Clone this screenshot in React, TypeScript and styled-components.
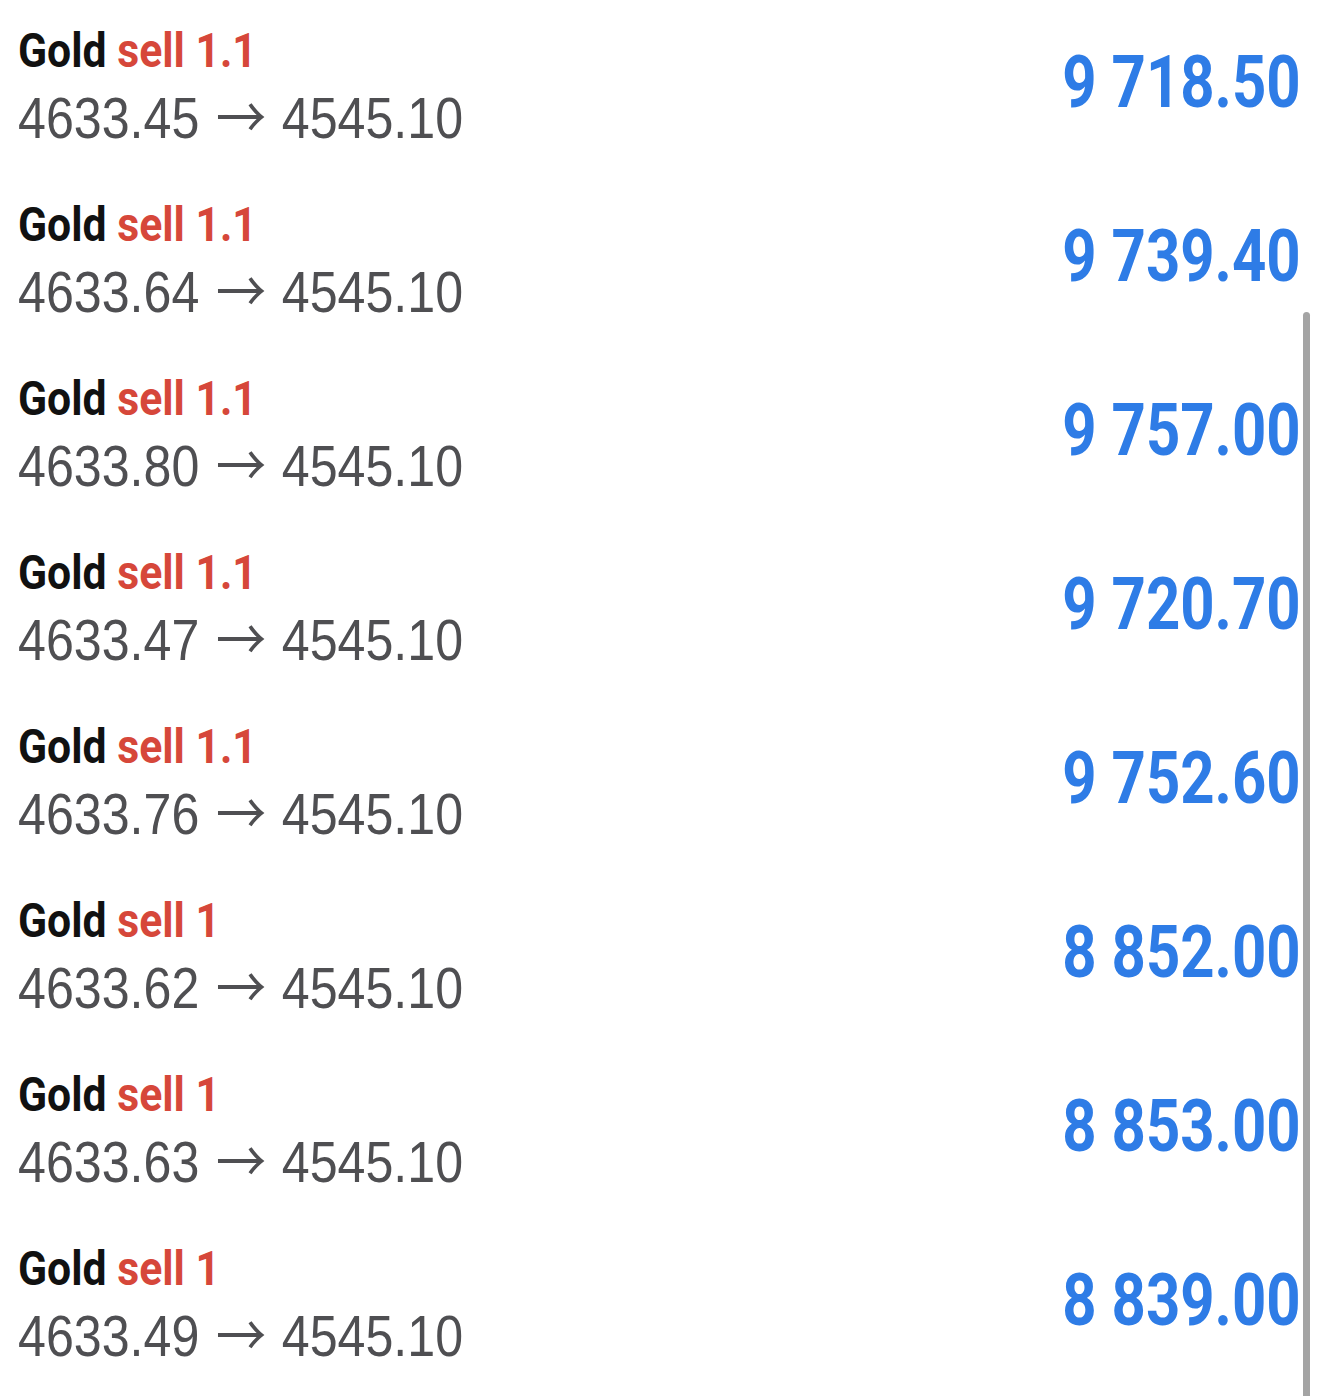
import React from "react";
import styled, { createGlobalStyle } from "styled-components";

const Global = createGlobalStyle`
  html, body { margin: 0; padding: 0; background: #ffffff; }
  body { font-family: "Liberation Sans", Arial, sans-serif; }
`;

const Page = styled.div`
  position: relative;
  width: 1320px;
  height: 1396px;
  overflow: hidden;
  background: #ffffff;
`;

const List = styled.div`
  display: flex;
  flex-direction: column;
`;

const Row = styled.div`
  height: 174px;
  box-sizing: border-box;
  padding: 22.5px 19px 0 18px;
  display: flex;
  justify-content: space-between;
  align-items: flex-start;
`;

const Left = styled.div`
  display: flex;
  flex-direction: column;
`;

const Title = styled.div`
  font-family: Roboto, "Noto Sans", sans-serif;
  font-weight: 700;
  font-size: 48px;
  line-height: 56px;
  color: #111111;
  white-space: nowrap;
  transform: scaleX(0.89);
  transform-origin: left center;
`;

const Sell = styled.span`
  color: #d6473a;
`;

const Prices = styled.div`
  margin-top: 7px;
  height: 64px;
  font-family: "Liberation Sans", Arial, sans-serif;
  font-size: 57px;
  line-height: 64px;
  color: #4f4f52;
  white-space: nowrap;
  transform: scaleX(0.88);
  transform-origin: left center;
`;

const Arrow = styled.span`
  font-family: "Noto Sans CJK SC", "DejaVu Sans", sans-serif;
  font-size: 57px;
  line-height: 0;
  color: #4f4f52;
  margin: 0 2px 0 3px;
`;

const Amount = styled.div`
  margin-top: 23px;
  font-family: Roboto, "Noto Sans", sans-serif;
  font-weight: 700;
  font-size: 73px;
  line-height: 73px;
  color: #2e7ce6;
  white-space: nowrap;
  transform: scaleX(0.82);
  transform-origin: right center;
`;

const Scrollbar = styled.div`
  position: absolute;
  left: 1303px;
  top: 312px;
  width: 7px;
  bottom: 0;
  border-radius: 4px 4px 0 0;
  background: #a4a4a4;
`;

type Trade = { lots: string; open: string; close: string; profit: string };

const trades: Trade[] = [
  { lots: "1.1", open: "4633.45", close: "4545.10", profit: "9 718.50" },
  { lots: "1.1", open: "4633.64", close: "4545.10", profit: "9 739.40" },
  { lots: "1.1", open: "4633.80", close: "4545.10", profit: "9 757.00" },
  { lots: "1.1", open: "4633.47", close: "4545.10", profit: "9 720.70" },
  { lots: "1.1", open: "4633.76", close: "4545.10", profit: "9 752.60" },
  { lots: "1", open: "4633.62", close: "4545.10", profit: "8 852.00" },
  { lots: "1", open: "4633.63", close: "4545.10", profit: "8 853.00" },
  { lots: "1", open: "4633.49", close: "4545.10", profit: "8 839.00" },
];

export default function App() {
  return (
    <Page>
      <Global />
      <List>
        {trades.map((t, i) => (
          <Row key={i}>
            <Left>
              <Title>
                Gold <Sell>sell {t.lots}</Sell>
              </Title>
              <Prices>
                {t.open} <Arrow>→</Arrow> {t.close}
              </Prices>
            </Left>
            <Amount>{t.profit}</Amount>
          </Row>
        ))}
      </List>
      <Scrollbar />
    </Page>
  );
}
